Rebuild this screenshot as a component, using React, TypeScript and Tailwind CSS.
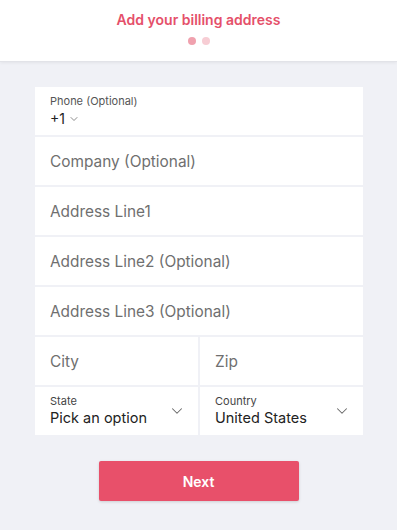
import { ChevronDown } from "lucide-react";

function TextRow({ label }: { label: string }) {
  return (
    <div className="h-12 bg-white flex items-center px-[15px] pt-[1px]">
      <input
        placeholder={label}
        className="w-full bg-transparent text-[15.4px] text-[#222] placeholder:text-[#6f6f6f] focus:outline-none"
      />
    </div>
  );
}

function SelectCell({ label, value }: { label: string; value: string }) {
  return (
    <div className="flex-1 h-12 bg-white flex items-center pl-[15px] pr-[12px]">
      <div className="flex-1 flex flex-col leading-none">
        <span className="text-[11px] text-[#444] mb-[4px]">{label}</span>
        <span className="text-[14.5px] text-[#222]">{value}</span>
      </div>
      <ChevronDown className="w-[18px] h-[18px] text-[#666]" strokeWidth={1.4} />
    </div>
  );
}

export default function App() {
  return (
    <div className="min-h-[530px] bg-[#f0f1f6] font-['Inter',sans-serif]">
      <div className="h-[62px] bg-white border-b border-[#e2e3e8] shadow-[0_1px_3px_rgba(0,0,0,0.06)] flex flex-col items-center pt-[10px]">
        <h1 className="text-[14px] font-semibold text-[#e5506a] leading-[20px]">Add your billing address</h1>
        <div className="flex gap-[6px] mt-[7px]">
          <span className="w-[8px] h-[8px] rounded-full bg-[#f0a1ae]" />
          <span className="w-[8px] h-[8px] rounded-full bg-[#f7cdd4]" />
        </div>
      </div>

      <div className="ml-[35px] w-[328px] mt-[25px] flex flex-col gap-[2px]">
        <div className="h-12 bg-white flex flex-col justify-center px-[15px]">
          <span className="text-[11px] text-[#555] leading-none mb-[5px]">Phone (Optional)</span>
          <div className="flex items-center gap-[3px] text-[14px] text-[#222] leading-none">
            +1 <ChevronDown className="w-[12px] h-[12px] text-[#666]" strokeWidth={1.5} />
          </div>
        </div>
        <TextRow label="Company (Optional)" />
        <TextRow label="Address Line1" />
        <TextRow label="Address Line2 (Optional)" />
        <TextRow label="Address Line3 (Optional)" />
        <div className="flex gap-[2px]">
          <div className="flex-1 h-12 bg-white flex items-center px-[15px] pt-[1px]">
            <input placeholder="City" className="w-full bg-transparent text-[15.4px] placeholder:text-[#6f6f6f] focus:outline-none" />
          </div>
          <div className="flex-1 h-12 bg-white flex items-center px-[15px] pt-[1px]">
            <input placeholder="Zip" className="w-full bg-transparent text-[15.4px] placeholder:text-[#6f6f6f] focus:outline-none" />
          </div>
        </div>
        <div className="flex gap-[2px]">
          <SelectCell label="State" value="Pick an option" />
          <SelectCell label="Country" value="United States" />
        </div>
      </div>

      <div className="flex justify-center mt-[26px]">
        <button className="w-[200px] h-[40px] rounded-[2px] bg-[#e8506a] text-white text-[14px] font-semibold shadow-[0_1px_3px_rgba(0,0,0,0.15)]">
          Next
        </button>
      </div>
    </div>
  );
}
